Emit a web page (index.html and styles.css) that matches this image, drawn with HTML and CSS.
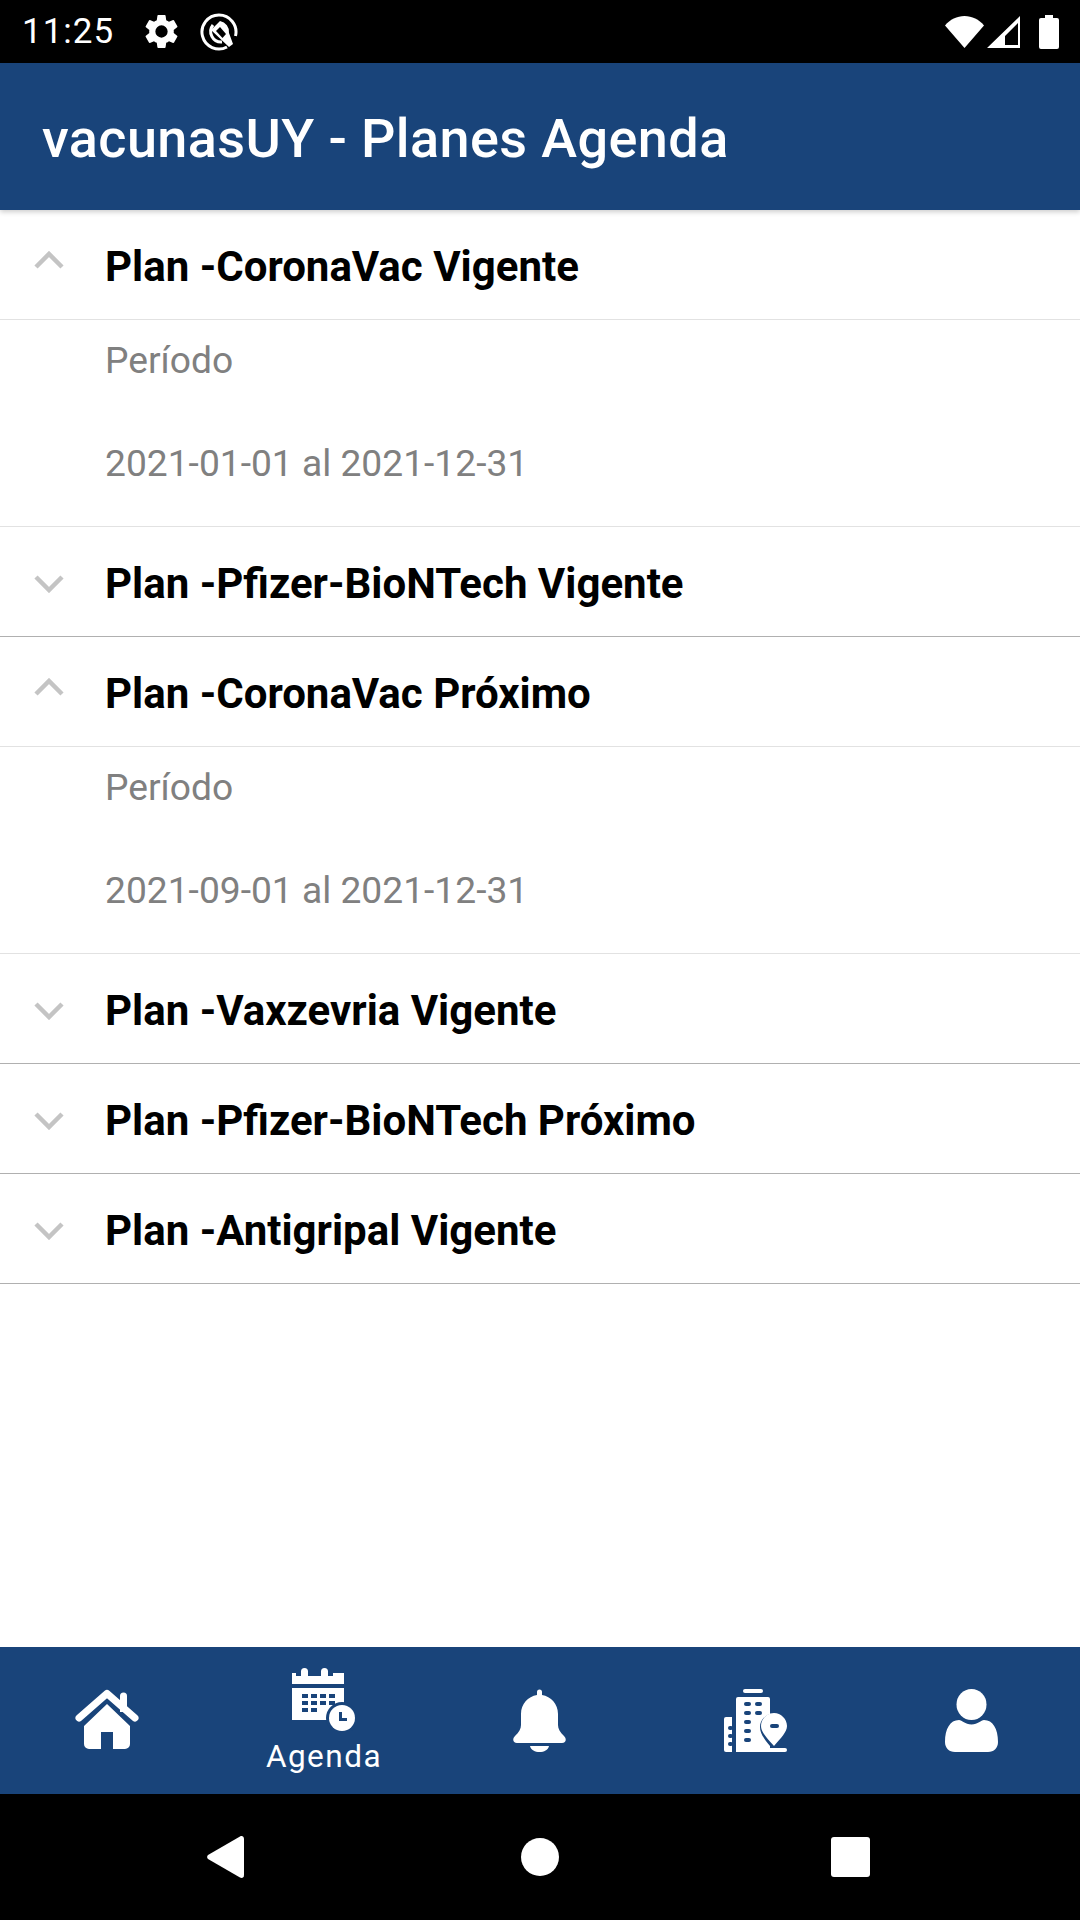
FILE: index.html
```html
<!DOCTYPE html>
<html>
<head>
	<meta charset="utf-8">
	<title>vacunasUY - Planes Agenda</title>
	<link rel="stylesheet" href="styles.css">
</head>
<body>

<div class="statusbar">
	<span class="clock">11:25</span>
	<svg class="ic-gear" viewBox="0 0 24 24"><path fill="#fff" d="M19.14 12.94c.04-.3.06-.61.06-.94 0-.32-.02-.64-.07-.94l2.03-1.58a.49.49 0 0 0 .12-.61l-1.92-3.32a.49.49 0 0 0-.59-.22l-2.39.96c-.5-.38-1.03-.7-1.62-.94l-.36-2.54a.48.48 0 0 0-.48-.41h-3.84a.47.47 0 0 0-.47.41l-.36 2.54c-.59.24-1.13.57-1.62.94l-2.39-.96a.48.48 0 0 0-.59.22L2.74 8.87a.47.47 0 0 0 .12.61l2.03 1.58c-.05.3-.09.63-.09.94s.02.64.07.94l-2.03 1.58a.49.49 0 0 0-.12.61l1.92 3.32c.12.22.37.29.59.22l2.39-.96c.5.38 1.03.7 1.62.94l.36 2.54c.05.24.24.41.48.41h3.84c.24 0 .44-.17.47-.41l.36-2.54c.59-.24 1.13-.56 1.62-.94l2.39.96c.22.08.47 0 .59-.22l1.92-3.32a.47.47 0 0 0-.12-.61l-2.01-1.58zM12 15.6A3.6 3.6 0 1 1 12 8.4a3.6 3.6 0 0 1 0 7.2z"/></svg>
	<svg class="ic-q" viewBox="0 0 38 38" fill="none" stroke="#fff"><path stroke-width="3" d="M27 34A17 17 0 1 1 35.500 23"/><path stroke-width="3" d="M13 12A10.500 10.500 0 0 0 22 29"/><path fill="#fff" stroke="none" d="M11 17L20 8a11 11 0 0 1 9 12l4 11-4 3z"/><path fill="#000" stroke="none" d="M16 18l4-4 6 7-3.500 4z"/></svg>
	<span class="grow"></span>
	<svg class="ic-wifi" viewBox="0 0 39 32"><path fill="#fff" d="M19.5 32L0 9.5C5 3.500 12 0 19.500 0S34 3.500 39 9.500z"/></svg>
	<svg class="ic-signal" viewBox="0 0 33 32"><path fill="#fff" fill-rule="evenodd" d="M33 0v32H0zM31 7L18 20v9h13z"/></svg>
	<svg class="ic-battery" viewBox="0 0 20 34"><path fill="#fff" d="M6 0h8v3h4a2 2 0 0 1 2 2v27a2 2 0 0 1-2 2H2a2 2 0 0 1-2-2V5a2 2 0 0 1 2-2h4z"/></svg>
</div>

<div class="appbar">vacunasUY - Planes Agenda</div>

<div class="planes">
	<div class="plan-head open">
		<svg class="chev up" viewBox="0 0 30 18"><path d="M2 16L15 3l13 13"/></svg>
		<span class="plan-title">Plan -CoronaVac Vigente</span>
	</div>
	<div class="plan-body">
		<p>Período</p>
		<p>2021-01-01 al 2021-12-31</p>
	</div>
	<div class="plan-head">
		<svg class="chev down" viewBox="0 0 30 18"><path d="M2 2l13 13L28 2"/></svg>
		<span class="plan-title">Plan -Pfizer-BioNTech Vigente</span>
	</div>
	<div class="plan-head open">
		<svg class="chev up" viewBox="0 0 30 18"><path d="M2 16L15 3l13 13"/></svg>
		<span class="plan-title">Plan -CoronaVac Próximo</span>
	</div>
	<div class="plan-body">
		<p>Período</p>
		<p>2021-09-01 al 2021-12-31</p>
	</div>
	<div class="plan-head">
		<svg class="chev down" viewBox="0 0 30 18"><path d="M2 2l13 13L28 2"/></svg>
		<span class="plan-title">Plan -Vaxzevria Vigente</span>
	</div>
	<div class="plan-head">
		<svg class="chev down" viewBox="0 0 30 18"><path d="M2 2l13 13L28 2"/></svg>
		<span class="plan-title">Plan -Pfizer-BioNTech Próximo</span>
	</div>
	<div class="plan-head">
		<svg class="chev down" viewBox="0 0 30 18"><path d="M2 2l13 13L28 2"/></svg>
		<span class="plan-title">Plan -Antigripal Vigente</span>
	</div>
</div>

<div class="tabs">
	<div class="tab">
		<svg class="ic-home" viewBox="0 0 64 60">
			<path fill="none" stroke="#fff" stroke-width="7" stroke-linecap="round" stroke-linejoin="round" d="M4 29L32 4.500 60 29"/>
			<path fill="#fff" d="M45 7a3.500 3.500 0 0 1 7 0v16h-7z"/>
			<path fill="#fff" d="M32 15l23 22v18a5 5 0 0 1-5 5H38V43H26v17H14a5 5 0 0 1-5-5V37z"/>
		</svg>
	</div>
	<div class="tab active">
		<svg class="ic-cal" viewBox="0 0 63 63">
			<path fill="#fff" d="M0 5h4v3h5V3.500a3.500 3.500 0 0 1 7 0V8h13V3.500a3.500 3.500 0 0 1 7 0V8h5V5h11v11H0zM0 5z"/>
			<path fill="#fff" fill-rule="evenodd" d="M0 20h52v32H0zM10 26v4h6v-4zm9 0v4h6v-4zm9 0v4h6v-4zm9 0v4h6v-4zM10 33v4h6v-4zm9 0v4h6v-4zm9 0v4h6v-4zm9 0v4h6v-4zM10 40v4h6v-4zm9 0v4h6v-4z"/>
			<circle cx="50" cy="50" r="16" fill="#19447a"/>
			<circle cx="50" cy="50" r="13" fill="#fff"/>
			<path fill="#19447a" d="M47 44h3v6h5v3h-8z"/>
		</svg>
		<span class="tab-label">Agenda</span>
	</div>
	<div class="tab">
		<svg class="ic-bell" viewBox="0 0 53 63">
			<path fill="#fff" d="M24 3a2.500 2.500 0 0 1 5 0v3c9 1.500 16 9 16 19v11c0 4 2 7 6 11 3 3 2 7-2 7H4c-4 0-5-4-2-7 4-4 6-7 6-11V25C8 15 15 7.500 24 6z"/>
			<path fill="#fff" d="M17 57h19c-1 4-5 6-9.500 6S18 61 17 57z"/>
		</svg>
	</div>
	<div class="tab">
		<svg class="ic-build" viewBox="0 0 63 63">
			<rect x="19" y="0" width="20" height="4" rx="2" fill="#fff"/>
			<path fill="#fff" d="M14 8h30a2 2 0 0 1 2 2v15c-6 2-10 7-10 13 0 7 5 13 10 19v6H12V10a2 2 0 0 1 2-2z"/>
			<path fill="#fff" d="M2 28h6v35H2a2 2 0 0 1-2-2V30a2 2 0 0 1 2-2z"/>
			<g fill="#19447a">
				<rect x="20" y="13" width="7" height="4" rx="2"/><rect x="31" y="13" width="7" height="4" rx="2"/>
				<rect x="20" y="22" width="7" height="4" rx="2"/><rect x="31" y="22" width="7" height="4" rx="2"/>
				<rect x="20" y="31" width="7" height="4" rx="2"/>
				<rect x="20" y="40" width="7" height="4" rx="2"/>
				<rect x="20" y="49" width="7" height="4" rx="2"/>
				<rect x="4" y="37" width="5" height="4" rx="2"/><rect x="4" y="45" width="5" height="4" rx="2"/><rect x="4" y="53" width="5" height="4" rx="2"/>
			</g>
			<path fill="#fff" d="M50 24c7 0 13 6 13 13 0 6-6 12-13 20-7-8-13-14-13-20 0-7 6-13 13-13z"/>
			<rect x="46" y="35" width="9" height="4" rx="2" fill="#19447a"/>
			<path fill="#fff" d="M46 59h15a2 2 0 0 1 0 4H46z"/>
		</svg>
	</div>
	<div class="tab">
		<svg class="ic-person" viewBox="0 0 53 63">
			<ellipse cx="26.500" cy="15.500" rx="15" ry="15.500" fill="#fff"/>
			<path fill="#fff" d="M14 31c3 0 6 4.500 12.500 4.500S36 31 39 31c9 0 14 9 14 22 0 6-4 10-10 10H10C4 63 0 59 0 53c0-13 5-22 14-22z"/>
		</svg>
	</div>
</div>

<div class="sysnav">
	<svg class="ic-back" viewBox="0 0 37 42"><path fill="#fff" d="M1 23a3 3 0 0 1 0-4L33 0.500c2-1 4 0 4 2.500v36c0 2.500-2 3.500-4 2.500z"/></svg>
	<span class="ic-home-dot"></span>
	<span class="ic-recent"></span>
</div>

</body>
</html>
```

FILE: styles.css
```css
*{
	margin: 0;
	padding: 0;
	box-sizing: border-box;
}

body{
	width: 1080px;
	height: 1920px;
	display: flex;
	flex-direction: column;
	background-color: #fff;
	font-family: Roboto, sans-serif;
	overflow: hidden;
}

svg{
	display: block;
	flex: none;
}

.grow{
	flex: 1;
}

/* status bar */
.statusbar{
	height: 63px;
	background-color: #000;
	color: #fff;
	display: flex;
	align-items: center;
	padding: 0 21px 0 22px;
}

.clock{
	font-size: 35px;
	letter-spacing: 1px;
	width: 119px;
}

.ic-gear{
	width: 41px;
	height: 41px;
	margin-right: 18px;
}

.ic-q{
	width: 38px;
	height: 38px;
}

.ic-wifi{
	width: 39px;
	height: 32px;
	margin-right: 3px;
}

.ic-signal{
	width: 33px;
	height: 32px;
	margin-right: 19px;
}

.ic-battery{
	width: 20px;
	height: 34px;
}

/* app bar */
.appbar{
	height: 147px;
	background-color: #19447a;
	color: #fff;
	font-size: 54px;
	font-weight: 500;
	letter-spacing: .4px;
	display: flex;
	align-items: center;
	padding: 4px 0 0 42px;
	position: relative;
	box-shadow: 0 2px 5px rgba(0,0,0,.2);
}

/* plan list */
.planes{
	flex: 1;
}

.plan-head{
	height: 110px;
	display: flex;
	align-items: center;
	padding-left: 34px;
	border-bottom: 1px solid #b0b0b0;
}

.plan-head.open{
	border-bottom-color: #e2e2e2;
}

.plan-title{
	font-size: 42px;
	font-weight: 700;
	color: #000;
	padding-top: 4px;
}

.chev{
	width: 30px;
	height: 18px;
	margin-right: 41px;
	fill: none;
	stroke: #c4c4c4;
	stroke-width: 4.5;
}

.chev.up{
	margin-bottom: 10px;
}

.chev.down{
	margin-top: 4px;
}

.plan-body{
	height: 207px;
	padding: 18px 0 0 105px;
	border-bottom: 1px solid #e2e2e2;
	display: flex;
	flex-direction: column;
	gap: 59px;
	font-size: 37.2px;
	color: #808080;
}

/* bottom tabs */
.tabs{
	height: 147px;
	background-color: #19447a;
	display: flex;
}

.tab{
	width: 216px;
	display: flex;
	flex-direction: column;
	align-items: center;
	padding-top: 42px;
}

.tab svg{
	margin-right: 2px;
}

.tab.active{
	padding-top: 21px;
}

.tab-label{
	color: #fff;
	font-size: 31.5px;
	letter-spacing: 1.5px;
	margin-top: 7px;
}

.ic-home{
	width: 64px;
	height: 60px;
}

.ic-cal{
	width: 63px;
	height: 63px;
}

.ic-bell,
.ic-person{
	width: 53px;
	height: 63px;
}

.ic-build{
	width: 63px;
	height: 63px;
}

/* android nav */
.sysnav{
	height: 126px;
	background-color: #000;
	display: flex;
	align-items: center;
	padding-left: 207px;
}

.ic-back{
	width: 37px;
	height: 42px;
	margin-right: 277px;
}

.ic-home-dot{
	width: 38px;
	height: 38px;
	border-radius: 50%;
	background-color: #fff;
	margin-right: 272px;
}

.ic-recent{
	width: 39px;
	height: 40px;
	border-radius: 3px;
	background-color: #fff;
}
```
